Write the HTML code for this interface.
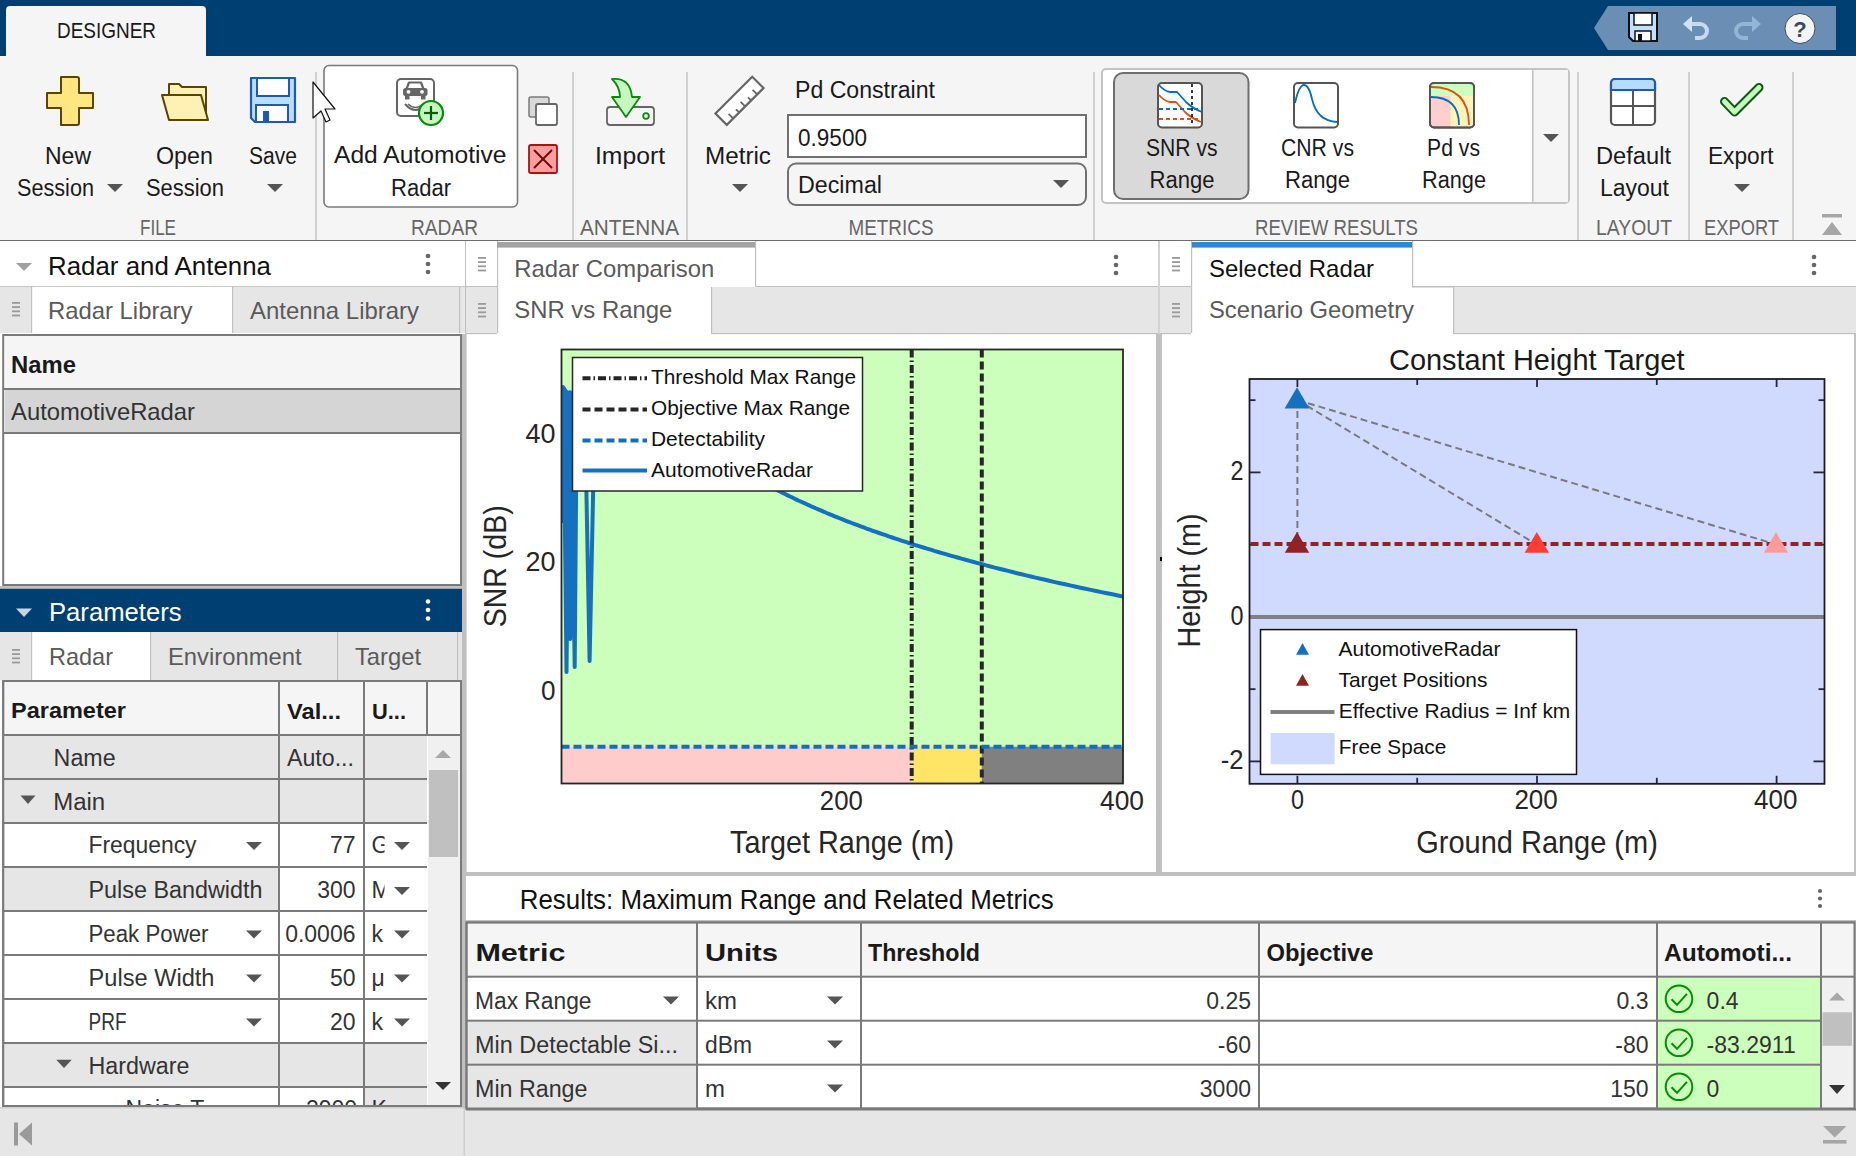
<!DOCTYPE html>
<html><head><meta charset="utf-8"><title>Radar Designer</title>
<style>
html,body{margin:0;padding:0;background:#fff;}
body{width:1856px;height:1156px;overflow:hidden;position:relative;font-family:"Liberation Sans",sans-serif;}
svg.page{position:absolute;left:0;top:0;display:block;}
svg text{font-family:"Liberation Sans",sans-serif;}
</style></head><body>
<svg class="page" width="1856" height="1156" viewBox="0 0 1856 1156">
<rect x="0" y="0" width="1856" height="56" fill="#003f72" />
<path d="M6,56 V10 Q6,6 10,6 H202 Q206,6 206,10 V56 Z" fill="#f5f5f5"/>
<text x="57" y="37.6" font-size="21.5" fill="#1a1a1a" textLength="99" lengthAdjust="spacingAndGlyphs" >DESIGNER</text>
<polygon points="1594,28 1608,6 1836,6 1836,50 1608,50" fill="#6b8fb4"/>
<path d="M1629,13 H1657 V41 H1633 L1629,37 Z" fill="#bfe0ff" stroke="#111" stroke-width="2"/>
<rect x="1634" y="13" width="18" height="12" fill="#fff" stroke="#111" stroke-width="1.5" />
<rect x="1635" y="31" width="16" height="10" fill="#fff" stroke="#111" stroke-width="1.5" />
<rect x="1638" y="34" width="4" height="7" fill="#111" />
<path d="M1688,24 h12 a7,7 0 0 1 0,14 h-5" fill="none" stroke="#cfe3f5" stroke-width="4" opacity="0.9"/>
<polygon points="1683,24 1692,16 1692,32" fill="#cfe3f5"/>
<path d="M1755,24 h-12 a7,7 0 0 0 0,14 h5" fill="none" stroke="#93b6d6" stroke-width="4"/>
<polygon points="1761,24 1752,16 1752,32" fill="#93b6d6"/>
<circle cx="1800" cy="28.5" r="15" fill="#f4f4f4" stroke="#3d4d5c" stroke-width="1"/>
<text x="1800" y="37" font-size="22" fill="#3a4a5a" font-weight="bold" text-anchor="middle" >?</text>
<rect x="0" y="56" width="1856" height="184" fill="#f5f5f5" />
<rect x="0" y="240" width="1856" height="1.8" fill="#6e6e6e" />
<rect x="315.25" y="72" width="1.5" height="168" fill="#c4c4c4" />
<rect x="572.25" y="72" width="1.5" height="168" fill="#c4c4c4" />
<rect x="686.25" y="72" width="1.5" height="168" fill="#c4c4c4" />
<rect x="1093.25" y="72" width="1.5" height="168" fill="#c4c4c4" />
<rect x="1577.25" y="72" width="1.5" height="168" fill="#c4c4c4" />
<rect x="1688.25" y="72" width="1.5" height="168" fill="#c4c4c4" />
<rect x="1792.25" y="72" width="1.5" height="168" fill="#c4c4c4" />
<text x="140" y="234.8" font-size="22.8" fill="#666666" textLength="36" lengthAdjust="spacingAndGlyphs" >FILE</text>
<text x="411" y="234.8" font-size="22.8" fill="#666666" textLength="67" lengthAdjust="spacingAndGlyphs" >RADAR</text>
<text x="580" y="234.8" font-size="22.8" fill="#666666" textLength="99" lengthAdjust="spacingAndGlyphs" >ANTENNA</text>
<text x="848.5" y="234.8" font-size="22.8" fill="#666666" textLength="85" lengthAdjust="spacingAndGlyphs" >METRICS</text>
<text x="1255" y="234.8" font-size="22.8" fill="#666666" textLength="163" lengthAdjust="spacingAndGlyphs" >REVIEW RESULTS</text>
<text x="1596" y="234.8" font-size="22.8" fill="#666666" textLength="76" lengthAdjust="spacingAndGlyphs" >LAYOUT</text>
<text x="1704" y="234.8" font-size="22.8" fill="#666666" textLength="75" lengthAdjust="spacingAndGlyphs" >EXPORT</text>
<path d="M61,77 h16 a2,2 0 0 1 2,2 v14 h14 v15 h-14 v15 a2,2 0 0 1 -2,2 h-16 v-17 h-14 v-15 h14 z" fill="#ffe680" stroke="#5a4400" stroke-width="2" stroke-linejoin="round" transform="translate(0,0)"/>
<text x="45" y="164" font-size="23" fill="#1a1a1a" textLength="46" lengthAdjust="spacingAndGlyphs" >New</text>
<text x="17" y="196" font-size="23" fill="#1a1a1a" textLength="77" lengthAdjust="spacingAndGlyphs" >Session</text>
<polygon points="107,184 123,184 115.0,192" fill="#555"/>
<path d="M169,84 h10 l3,3 h24 v30 h-37 z" fill="#fff0b3" stroke="#5a4400" stroke-width="2" stroke-linejoin="round"/>
<path d="M162,95 h39 l7,25 h-39 z" fill="#fff0b3" stroke="#5a4400" stroke-width="2" stroke-linejoin="round"/>
<text x="156" y="164" font-size="23" fill="#1a1a1a" textLength="57" lengthAdjust="spacingAndGlyphs" >Open</text>
<text x="146" y="196" font-size="23" fill="#1a1a1a" textLength="78" lengthAdjust="spacingAndGlyphs" >Session</text>
<path d="M251,78 h44 v44 h-40 l-4,-4 z" fill="#b9ddff" stroke="#1d5bb0" stroke-width="2.2" stroke-linejoin="round"/>
<rect x="257" y="78" width="32" height="18" fill="#fff" stroke="#1d5bb0" stroke-width="2" />
<rect x="256" y="105" width="32" height="17" fill="#fff" stroke="#1d5bb0" stroke-width="2" />
<rect x="263" y="111" width="6" height="11" fill="#1d5bb0" />
<text x="249" y="164" font-size="23" fill="#1a1a1a" textLength="48" lengthAdjust="spacingAndGlyphs" >Save</text>
<polygon points="267,184 283,184 275.0,192" fill="#555"/>
<rect x="324" y="65.5" width="193.5" height="141.5" fill="#fff" stroke="#7a7a7a" stroke-width="1.6" rx="5" />
<rect x="397" y="79" width="37" height="37" fill="#fff" stroke="#666" stroke-width="2" rx="4" />
<path d="M406.5,89 l2.5,-6.5 h12 l2.5,6.5" fill="none" stroke="#666" stroke-width="2.2" stroke-linejoin="round"/>
<rect x="403" y="88" width="24.5" height="8" rx="2.5" fill="#666"/>
<rect x="405" y="95" width="4.5" height="4.5" fill="#666" />
<rect x="421" y="95" width="4.5" height="4.5" fill="#666" />
<circle cx="408.5" cy="91.8" r="1.9" fill="#fff"/><circle cx="422" cy="91.8" r="1.9" fill="#fff"/>
<path d="M405,104 q10.5,12 21,0" fill="none" stroke="#666" stroke-width="2"/>
<path d="M408,104 q7.5,7 15,0" fill="none" stroke="#666" stroke-width="1.6"/>
<circle cx="431" cy="113" r="12" fill="#c6f7c0" stroke="#0a8a0a" stroke-width="2.2"/>
<line x1="431" y1="106" x2="431" y2="120" stroke="#0a5a0a" stroke-width="2.2" />
<line x1="424" y1="113" x2="438" y2="113" stroke="#0a5a0a" stroke-width="2.2" />
<text x="334" y="163.4" font-size="23" fill="#1a1a1a" textLength="172.5" lengthAdjust="spacingAndGlyphs" >Add Automotive</text>
<text x="391" y="195.8" font-size="23" fill="#1a1a1a" textLength="60" lengthAdjust="spacingAndGlyphs" >Radar</text>
<path d="M313,82 v36 l8,-7 l5,11 l4,-2 l-5,-11 l10,0 z" fill="#fff" stroke="#111" stroke-width="1.2" stroke-linejoin="round"/>
<rect x="529" y="97" width="20" height="20" fill="#d9d9d9" stroke="#7a7a7a" stroke-width="1.5" rx="2" />
<rect x="536" y="104" width="21" height="21" fill="#fff" stroke="#666" stroke-width="1.8" rx="2" />
<rect x="529" y="145" width="28" height="28" fill="#ff9c9c" stroke="#a31515" stroke-width="1.8" rx="2" />
<line x1="534" y1="150" x2="552" y2="168" stroke="#6b0d0d" stroke-width="2" />
<line x1="552" y1="150" x2="534" y2="168" stroke="#6b0d0d" stroke-width="2" />
<rect x="607" y="107" width="47" height="18" fill="#f5f5f5" stroke="#666" stroke-width="1.8" rx="3" />
<circle cx="646" cy="116" r="2.8" fill="none" stroke="#0a8a0a" stroke-width="1.8"/>
<path d="M612,79 q18,-2 20,18 h8 l-14,20 l-14,-20 h8 q0,-10 -8,-18 z" fill="#c6f7c0" stroke="#0a8a0a" stroke-width="1.8" stroke-linejoin="round"/>
<text x="595" y="164" font-size="23" fill="#1a1a1a" textLength="70" lengthAdjust="spacingAndGlyphs" >Import</text>
<g transform="translate(739.5,100.8) rotate(-45)"><rect x="-26" y="-8" width="52" height="16" fill="#fff" stroke="#666" stroke-width="2.2"/>
<line x1="-17.0" y1="8" x2="-17.0" y2="1.5" stroke="#666" stroke-width="1.8"/>
<line x1="-8.5" y1="8" x2="-8.5" y2="3.5" stroke="#666" stroke-width="1.8"/>
<line x1="0.0" y1="8" x2="0.0" y2="1.5" stroke="#666" stroke-width="1.8"/>
<line x1="8.5" y1="8" x2="8.5" y2="3.5" stroke="#666" stroke-width="1.8"/>
<line x1="17.0" y1="8" x2="17.0" y2="1.5" stroke="#666" stroke-width="1.8"/>
</g>
<text x="705" y="164" font-size="23" fill="#1a1a1a" textLength="66" lengthAdjust="spacingAndGlyphs" >Metric</text>
<polygon points="732,184 748,184 740.0,192" fill="#555"/>
<text x="795" y="98" font-size="23" fill="#1a1a1a" textLength="140" lengthAdjust="spacingAndGlyphs" >Pd Constraint</text>
<rect x="788" y="115" width="298" height="42" fill="#fff" stroke="#707070" stroke-width="2" />
<text x="798" y="145.7" font-size="23" fill="#1a1a1a" textLength="69" lengthAdjust="spacingAndGlyphs" >0.9500</text>
<rect x="788" y="163.5" width="298" height="41.5" fill="#f5f5f5" stroke="#707070" stroke-width="2" rx="8" />
<text x="798" y="193.4" font-size="23" fill="#1a1a1a" textLength="84" lengthAdjust="spacingAndGlyphs" >Decimal</text>
<polygon points="1053,180 1069,180 1061.0,188" fill="#555"/>
<rect x="1102" y="69" width="467" height="134" fill="#fff" stroke="#c4c4c4" stroke-width="2" rx="4" />
<rect x="1533" y="70" width="35" height="132" fill="#f5f5f5" />
<rect x="1532" y="70" width="1.6" height="132" fill="#c4c4c4" />
<polygon points="1543,134 1559,134 1551.0,142" fill="#555"/>
<rect x="1114" y="73" width="134.5" height="126" fill="#d9d9d9" stroke="#6e6e6e" stroke-width="2" rx="9" />
<rect x="1158" y="83" width="44" height="44.5" fill="#fff" stroke="#555" stroke-width="2" rx="4" />
<path d="M1159,85 q5,6 11,7 h7 l9,10 q6,6 16,10" fill="none" stroke="#0072bd" stroke-width="1.8" stroke-linejoin="round"/>
<path d="M1159,95 q5,6 11,7 h6 l9,10 q6,6 16,10" fill="none" stroke="#d95319" stroke-width="1.8" stroke-linejoin="round"/>
<line x1="1159" y1="109" x2="1201" y2="109" stroke="#0072bd" stroke-width="1.8" stroke-dasharray="4,3" />
<line x1="1159" y1="119" x2="1201" y2="119" stroke="#d95319" stroke-width="1.8" stroke-dasharray="4,3" />
<line x1="1192" y1="84" x2="1192" y2="126" stroke="#222" stroke-width="1.8" stroke-dasharray="3,3" />
<text x="1146" y="156" font-size="23" fill="#1a1a1a" textLength="71.5" lengthAdjust="spacingAndGlyphs" >SNR vs</text>
<text x="1149.5" y="188" font-size="23" fill="#1a1a1a" textLength="65" lengthAdjust="spacingAndGlyphs" >Range</text>
<rect x="1294" y="83" width="44" height="44.5" fill="#fff" stroke="#555" stroke-width="2" rx="4" />
<path d="M1295,103 q4,-18 9,-18 q5,0 8,14 q5,22 25,23" fill="none" stroke="#0072bd" stroke-width="1.8"/>
<text x="1281" y="156" font-size="23" fill="#1a1a1a" textLength="73" lengthAdjust="spacingAndGlyphs" >CNR vs</text>
<text x="1285" y="188" font-size="23" fill="#1a1a1a" textLength="65" lengthAdjust="spacingAndGlyphs" >Range</text>
<rect x="1430" y="83" width="44" height="44.5" fill="#ffcfcf" stroke="#555" stroke-width="2" rx="4" />
<path d="M1431,84 h42 v12 h-42 z" fill="#ccffbb"/>
<path d="M1450.5,96 h22.5 v30.5 h-22.5 z" fill="#fff3b8"/>
<rect x="1430" y="83" width="44" height="44.5" fill="none" stroke="#555" stroke-width="2" rx="4" />
<path d="M1431,87 q38,0 38,38" fill="none" stroke="#d95319" stroke-width="1.8"/>
<path d="M1431,97 q28,0 28,28" fill="none" stroke="#0072bd" stroke-width="1.8"/>
<text x="1427" y="156" font-size="23" fill="#1a1a1a" textLength="53" lengthAdjust="spacingAndGlyphs" >Pd vs</text>
<text x="1422" y="188" font-size="23" fill="#1a1a1a" textLength="64" lengthAdjust="spacingAndGlyphs" >Range</text>
<rect x="1611" y="79" width="44" height="46" fill="#fff" stroke="#555" stroke-width="2.2" rx="4" />
<path d="M1611,90 v-7 a4,4 0 0 1 4,-4 h36 a4,4 0 0 1 4,4 v7 z" fill="#b3dcff" stroke="#1d5bb0" stroke-width="2.2"/>
<line x1="1633" y1="90" x2="1633" y2="125" stroke="#555" stroke-width="2" />
<line x1="1611" y1="106" x2="1655" y2="106" stroke="#555" stroke-width="2" />
<text x="1596" y="164" font-size="23" fill="#1a1a1a" textLength="75" lengthAdjust="spacingAndGlyphs" >Default</text>
<text x="1600" y="196" font-size="23" fill="#1a1a1a" textLength="69" lengthAdjust="spacingAndGlyphs" >Layout</text>
<path d="M1724.5,101.5 L1734.5,112 L1759,87.5" fill="none" stroke="#0b5a0b" stroke-width="9" stroke-linecap="round" stroke-linejoin="round"/>
<path d="M1724.5,101.5 L1734.5,112 L1759,87.5" fill="none" stroke="#c6f7c0" stroke-width="5" stroke-linecap="round" stroke-linejoin="round"/>
<text x="1708" y="164" font-size="23" fill="#1a1a1a" textLength="65.5" lengthAdjust="spacingAndGlyphs" >Export</text>
<polygon points="1734,184 1750,184 1742.0,192" fill="#555"/>
<rect x="1822" y="214" width="20" height="3.5" fill="#a6a6a6" />
<polygon points="1822,235 1842,235 1832.0,222" fill="#a6a6a6"/>
<rect x="0" y="241" width="466" height="867" fill="#fff" />
<rect x="465" y="241" width="1.2" height="867" fill="#c0c0c0" />
<rect x="0" y="286" width="465" height="1.5" fill="#c8c8c8" />
<polygon points="16,263 32,263 24.0,271" fill="#a0a0a0"/>
<text x="48" y="275" font-size="26" fill="#111" textLength="223" lengthAdjust="spacingAndGlyphs" >Radar and Antenna</text>
<circle cx="428" cy="256" r="2.3" fill="#666"/>
<circle cx="428" cy="264" r="2.3" fill="#666"/>
<circle cx="428" cy="272" r="2.3" fill="#666"/>
<rect x="0" y="287" width="465" height="46" fill="#e6e6e6" />
<rect x="31" y="287" width="201" height="47" fill="#fff" />
<rect x="31" y="287" width="1.2" height="46" fill="#c0c0c0" />
<rect x="232" y="287" width="1.2" height="46" fill="#c0c0c0" />
<rect x="459" y="287" width="1.2" height="46" fill="#c0c0c0" />
<rect x="12" y="302.0" width="8" height="1.8" fill="#9a9a9a" />
<rect x="12" y="306.2" width="8" height="1.8" fill="#9a9a9a" />
<rect x="12" y="310.4" width="8" height="1.8" fill="#9a9a9a" />
<rect x="12" y="314.6" width="8" height="1.8" fill="#9a9a9a" />
<text x="48" y="318.7" font-size="24" fill="#5a5a5a" textLength="144.5" lengthAdjust="spacingAndGlyphs" >Radar Library</text>
<text x="250" y="318.7" font-size="24" fill="#5a5a5a" textLength="169" lengthAdjust="spacingAndGlyphs" >Antenna Library</text>
<rect x="3.2" y="335" width="457.8" height="250" fill="#fff" stroke="#7a7a7a" stroke-width="2" />
<rect x="5" y="336" width="455" height="52" fill="#f5f5f5" />
<rect x="4" y="388" width="457" height="2" fill="#7a7a7a" />
<rect x="5" y="390" width="455" height="42" fill="#d5d5d5" />
<rect x="4" y="432" width="457" height="2" fill="#7a7a7a" />
<text x="11" y="373" font-size="23" fill="#1a1a1a" font-weight="bold" textLength="65" lengthAdjust="spacingAndGlyphs" >Name</text>
<text x="11" y="419.7" font-size="24" fill="#333" textLength="184" lengthAdjust="spacingAndGlyphs" >AutomotiveRadar</text>
<rect x="0" y="586" width="468" height="3" fill="#c0c0c0" />
<rect x="0" y="588.8" width="464" height="43.2" fill="#003f72" />
<polygon points="16,608.5 32,608.5 24.0,617" fill="#c8d6e4"/>
<text x="49" y="621.2" font-size="26" fill="#fff" textLength="132.5" lengthAdjust="spacingAndGlyphs" >Parameters</text>
<circle cx="428" cy="601.5" r="2.3" fill="#fff"/>
<circle cx="428" cy="610" r="2.3" fill="#fff"/>
<circle cx="428" cy="618.5" r="2.3" fill="#fff"/>
<rect x="0" y="632" width="464" height="48" fill="#e6e6e6" />
<rect x="31" y="632" width="119" height="49" fill="#fff" />
<rect x="31" y="632" width="1.2" height="48" fill="#c0c0c0" />
<rect x="150" y="632" width="1.2" height="48" fill="#c0c0c0" />
<rect x="337" y="632" width="1.2" height="48" fill="#c0c0c0" />
<rect x="457" y="632" width="1.2" height="48" fill="#c0c0c0" />
<rect x="12" y="649.0" width="8" height="1.8" fill="#9a9a9a" />
<rect x="12" y="653.2" width="8" height="1.8" fill="#9a9a9a" />
<rect x="12" y="657.4" width="8" height="1.8" fill="#9a9a9a" />
<rect x="12" y="661.6" width="8" height="1.8" fill="#9a9a9a" />
<text x="49" y="664.8" font-size="24" fill="#5a5a5a" textLength="64" lengthAdjust="spacingAndGlyphs" >Radar</text>
<text x="168" y="664.8" font-size="24" fill="#5a5a5a" textLength="133.5" lengthAdjust="spacingAndGlyphs" >Environment</text>
<text x="355" y="664.8" font-size="24" fill="#5a5a5a" textLength="66" lengthAdjust="spacingAndGlyphs" >Target</text>
<rect x="3.2" y="681" width="457.8" height="425" fill="#fff" stroke="#7a7a7a" stroke-width="2" />
<rect x="5" y="682" width="455" height="53" fill="#f5f5f5" />
<rect x="5" y="736" width="274" height="43" fill="#e6e6e6" />
<rect x="280" y="736" width="84" height="43" fill="#e6e6e6" />
<rect x="365" y="736" width="62" height="43" fill="#e6e6e6" />
<rect x="5" y="780" width="274" height="43" fill="#e6e6e6" />
<rect x="280" y="780" width="84" height="43" fill="#e6e6e6" />
<rect x="365" y="780" width="62" height="43" fill="#e6e6e6" />
<rect x="5" y="868" width="274" height="43" fill="#e6e6e6" />
<rect x="5" y="1044" width="274" height="43" fill="#e6e6e6" />
<rect x="280" y="1044" width="84" height="43" fill="#e6e6e6" />
<rect x="365" y="1044" width="62" height="43" fill="#e6e6e6" />
<rect x="365" y="1088" width="62" height="18" fill="#e6e6e6" />
<rect x="4" y="734" width="423" height="2" fill="#7a7a7a" />
<rect x="4" y="778" width="423" height="2" fill="#7a7a7a" />
<rect x="4" y="822" width="423" height="2" fill="#7a7a7a" />
<rect x="4" y="866" width="423" height="2" fill="#7a7a7a" />
<rect x="4" y="910" width="423" height="2" fill="#7a7a7a" />
<rect x="4" y="954" width="423" height="2" fill="#7a7a7a" />
<rect x="4" y="998" width="423" height="2" fill="#7a7a7a" />
<rect x="4" y="1042" width="423" height="2" fill="#7a7a7a" />
<rect x="4" y="1086" width="423" height="2" fill="#7a7a7a" />
<rect x="4" y="734" width="456" height="2" fill="#7a7a7a" />
<rect x="278" y="682" width="2" height="423" fill="#7a7a7a" />
<rect x="363" y="682" width="2" height="423" fill="#7a7a7a" />
<rect x="426" y="682" width="2" height="53" fill="#7a7a7a" />
<rect x="428" y="736" width="32" height="369" fill="#f0f0f0" />
<polygon points="435,758 451,758 443.0,750" fill="#a8a8a8"/>
<rect x="429" y="770" width="29" height="87" fill="#c0c0c0" />
<polygon points="435,1082 451,1082 443.0,1090" fill="#333"/>
<rect x="3.2" y="681" width="457.8" height="425" fill="none" stroke="#7a7a7a" stroke-width="2" />
<text x="11" y="718.4" font-size="22" fill="#1a1a1a" font-weight="bold" textLength="115" lengthAdjust="spacingAndGlyphs" >Parameter</text>
<text x="287" y="719" font-size="22" fill="#1a1a1a" font-weight="bold" textLength="54" lengthAdjust="spacingAndGlyphs" >Val...</text>
<text x="372" y="719" font-size="22" fill="#1a1a1a" font-weight="bold" textLength="34" lengthAdjust="spacingAndGlyphs" >U...</text>
<text x="53.6" y="766" font-size="23" fill="#333" textLength="62" lengthAdjust="spacingAndGlyphs" >Name</text>
<text x="287" y="765.6" font-size="23" fill="#333" textLength="67" lengthAdjust="spacingAndGlyphs" >Auto...</text>
<polygon points="20.5,795.5 35.5,795.5 28.0,804" fill="#555"/>
<text x="53.2" y="810.3" font-size="23" fill="#333" textLength="52" lengthAdjust="spacingAndGlyphs" >Main</text>
<text x="88.5" y="853.4" font-size="23" fill="#333" textLength="108" lengthAdjust="spacingAndGlyphs" >Frequency</text>
<polygon points="246,841.9 262,841.9 254.0,849.9" fill="#555"/>
<text x="355.5" y="853.4" font-size="23" fill="#333" text-anchor="end" >77</text>
<svg x="365" y="823.4" width="19.5" height="40" overflow="hidden">
<text x="6.5" y="30" font-size="23" fill="#333" >G</text>
</svg>
<polygon points="394,841.9 410,841.9 402.0,849.9" fill="#555"/>
<text x="88.5" y="898.4" font-size="23" fill="#333" textLength="174" lengthAdjust="spacingAndGlyphs" >Pulse Bandwidth</text>
<text x="355.5" y="898.4" font-size="23" fill="#333" text-anchor="end" >300</text>
<svg x="365" y="868.4" width="19.5" height="40" overflow="hidden">
<text x="6.5" y="30" font-size="23" fill="#333" >M</text>
</svg>
<polygon points="394,886.9 410,886.9 402.0,894.9" fill="#555"/>
<text x="88.5" y="942" font-size="23" fill="#333" textLength="120" lengthAdjust="spacingAndGlyphs" >Peak Power</text>
<polygon points="246,930.5 262,930.5 254.0,938.5" fill="#555"/>
<text x="355.5" y="942" font-size="23" fill="#333" text-anchor="end" >0.0006</text>
<svg x="365" y="912" width="19.5" height="40" overflow="hidden">
<text x="6.5" y="30" font-size="23" fill="#333" >k</text>
</svg>
<polygon points="394,930.5 410,930.5 402.0,938.5" fill="#555"/>
<text x="88.5" y="986" font-size="23" fill="#333" textLength="126" lengthAdjust="spacingAndGlyphs" >Pulse Width</text>
<polygon points="246,974.5 262,974.5 254.0,982.5" fill="#555"/>
<text x="355.5" y="986" font-size="23" fill="#333" text-anchor="end" >50</text>
<svg x="365" y="956" width="19.5" height="40" overflow="hidden">
<text x="6.5" y="30" font-size="23" fill="#333" >μ</text>
</svg>
<polygon points="394,974.5 410,974.5 402.0,982.5" fill="#555"/>
<text x="88.5" y="1030" font-size="23" fill="#333" textLength="38" lengthAdjust="spacingAndGlyphs" >PRF</text>
<polygon points="246,1018.5 262,1018.5 254.0,1026.5" fill="#555"/>
<text x="355.5" y="1030" font-size="23" fill="#333" text-anchor="end" >20</text>
<svg x="365" y="1000" width="19.5" height="40" overflow="hidden">
<text x="6.5" y="30" font-size="23" fill="#333" >k</text>
</svg>
<polygon points="394,1018.5 410,1018.5 402.0,1026.5" fill="#555"/>
<polygon points="56.3,1059.7 71.7,1059.7 64.0,1068" fill="#555"/>
<text x="88.5" y="1073.8" font-size="23" fill="#333" textLength="101" lengthAdjust="spacingAndGlyphs" >Hardware</text>
<svg x="0" y="1088" width="427" height="17" overflow="hidden">
<text x="125.5" y="29" font-size="23" fill="#333" >Noise T...</text>
<text x="306" y="29" font-size="23" fill="#333" >2900</text>
<text x="371.5" y="29" font-size="23" fill="#333" >K</text>
</svg>
<rect x="0" y="1108" width="1856" height="48" fill="#e6e6e6" />
<rect x="0" y="1107" width="466" height="1.5" fill="#d0d0d0" />
<rect x="463.5" y="1108" width="1.5" height="48" fill="#cfcfcf" />
<rect x="14" y="1122.5" width="4" height="23" fill="#9a9a9a" />
<polygon points="32,1122.5 32,1145.5 19,1134" fill="#9a9a9a"/>
<rect x="1823" y="1140" width="23.5" height="3.6" fill="#a6a6a6" />
<polygon points="1823,1126 1846.5,1126 1834.75,1137.5" fill="#a6a6a6"/>
<rect x="466" y="241" width="1390" height="867" fill="#fff" />
<rect x="462" y="334" width="4.6" height="774" fill="#c0c0c0" />
<rect x="1156" y="334" width="6" height="538" fill="#c0c0c0" />
<rect x="466" y="872" width="1390" height="4" fill="#c0c0c0" />
<rect x="1854" y="334" width="2" height="538" fill="#c0c0c0" />
<rect x="1160" y="557" width="2" height="4" fill="#000" />
<rect x="466" y="241" width="31" height="46" fill="#fff" />
<rect x="497" y="241" width="1.2" height="46" fill="#c0c0c0" />
<rect x="497" y="242" width="258" height="5.6" fill="#a3a3a3" />
<rect x="466" y="286" width="31" height="1.5" fill="#c0c0c0" />
<rect x="755" y="241" width="1.2" height="46" fill="#c0c0c0" />
<rect x="755" y="286" width="403" height="1.5" fill="#c0c0c0" />
<rect x="1158.3" y="241" width="1.4" height="93" fill="#c0c0c0" />
<rect x="478" y="257.0" width="8" height="1.8" fill="#9a9a9a" />
<rect x="478" y="261.2" width="8" height="1.8" fill="#9a9a9a" />
<rect x="478" y="265.4" width="8" height="1.8" fill="#9a9a9a" />
<rect x="478" y="269.6" width="8" height="1.8" fill="#9a9a9a" />
<text x="514.3" y="277" font-size="24" fill="#5a5a5a" textLength="200" lengthAdjust="spacingAndGlyphs" >Radar Comparison</text>
<circle cx="1116" cy="257" r="2.3" fill="#666"/>
<circle cx="1116" cy="265" r="2.3" fill="#666"/>
<circle cx="1116" cy="273" r="2.3" fill="#666"/>
<rect x="466" y="287" width="31" height="46" fill="#e6e6e6" />
<rect x="497" y="287" width="1.2" height="46" fill="#c0c0c0" />
<rect x="711" y="287" width="447" height="46" fill="#e6e6e6" />
<rect x="711" y="287" width="1.2" height="46" fill="#c0c0c0" />
<rect x="466" y="333" width="1.2" height="1" fill="#c0c0c0" />
<rect x="711" y="333" width="447" height="1.2" fill="#c0c0c0" />
<rect x="466" y="333" width="31" height="1.2" fill="#c0c0c0" />
<rect x="478" y="303.0" width="8" height="1.8" fill="#9a9a9a" />
<rect x="478" y="307.2" width="8" height="1.8" fill="#9a9a9a" />
<rect x="478" y="311.4" width="8" height="1.8" fill="#9a9a9a" />
<rect x="478" y="315.6" width="8" height="1.8" fill="#9a9a9a" />
<text x="514.3" y="318.4" font-size="24" fill="#5a5a5a" textLength="158" lengthAdjust="spacingAndGlyphs" >SNR vs Range</text>
<rect x="1160" y="241" width="31" height="46" fill="#fff" />
<rect x="1191" y="241" width="1.2" height="46" fill="#c0c0c0" />
<rect x="1192" y="242" width="220" height="5.6" fill="#2a8ad9" />
<rect x="1160" y="286" width="31" height="1.5" fill="#c0c0c0" />
<rect x="1412" y="241" width="1.2" height="46" fill="#c0c0c0" />
<rect x="1412" y="286" width="444" height="1.5" fill="#c0c0c0" />
<rect x="1172" y="257.0" width="8" height="1.8" fill="#9a9a9a" />
<rect x="1172" y="261.2" width="8" height="1.8" fill="#9a9a9a" />
<rect x="1172" y="265.4" width="8" height="1.8" fill="#9a9a9a" />
<rect x="1172" y="269.6" width="8" height="1.8" fill="#9a9a9a" />
<text x="1209" y="276.8" font-size="24" fill="#111" textLength="165" lengthAdjust="spacingAndGlyphs" >Selected Radar</text>
<circle cx="1814" cy="257" r="2.3" fill="#666"/>
<circle cx="1814" cy="265" r="2.3" fill="#666"/>
<circle cx="1814" cy="273" r="2.3" fill="#666"/>
<rect x="1160" y="287" width="31" height="46" fill="#e6e6e6" />
<rect x="1191" y="287" width="1.2" height="46" fill="#c0c0c0" />
<rect x="1453" y="287" width="403" height="46" fill="#e6e6e6" />
<rect x="1453" y="287" width="1.2" height="46" fill="#c0c0c0" />
<rect x="1453" y="333" width="403" height="1.2" fill="#c0c0c0" />
<rect x="1160" y="333" width="31" height="1.2" fill="#c0c0c0" />
<rect x="1172" y="303.0" width="8" height="1.8" fill="#9a9a9a" />
<rect x="1172" y="307.2" width="8" height="1.8" fill="#9a9a9a" />
<rect x="1172" y="311.4" width="8" height="1.8" fill="#9a9a9a" />
<rect x="1172" y="315.6" width="8" height="1.8" fill="#9a9a9a" />
<text x="1209" y="318.4" font-size="24" fill="#5a5a5a" textLength="205" lengthAdjust="spacingAndGlyphs" >Scenario Geometry</text>
<clipPath id="cp1"><rect x="561.5" y="349.5" width="561.5" height="434.0"/></clipPath>
<g clip-path="url(#cp1)">
<rect x="561.5" y="349.5" width="561.5" height="434.0" fill="#ccffbb" />
<rect x="561.5" y="746.7" width="350.20000000000005" height="36.799999999999955" fill="#ffcccc" />
<rect x="911.7" y="746.7" width="70.09999999999991" height="36.799999999999955" fill="#ffe566" />
<rect x="981.8" y="746.7" width="141.20000000000005" height="36.799999999999955" fill="#808080" />
<polyline points="643.6,383.9 645.3,386.1 647.0,388.3 648.8,390.6 650.6,392.8 652.4,395.0 654.3,397.2 656.2,399.4 658.1,401.7 660.1,403.9 662.1,406.1 664.2,408.3 666.3,410.5 668.4,412.8 670.6,415.0 672.9,417.2 675.1,419.4 677.5,421.6 679.8,423.8 682.2,426.1 684.7,428.3 687.2,430.5 689.8,432.7 692.4,434.9 695.1,437.2 697.8,439.4 700.6,441.6 702.0,442.7 703.4,443.8 704.9,444.9 706.3,446.1 707.8,447.2 709.3,448.3 710.8,449.4 712.3,450.5 713.8,451.6 715.4,452.7 716.9,453.9 718.5,455.0 720.1,456.1 721.7,457.2 723.4,458.3 725.0,459.4 726.7,460.6 728.3,461.7 730.0,462.8 731.7,463.9 733.5,465.0 735.2,466.1 737.0,467.2 738.8,468.4 740.6,469.5 742.4,470.6 744.2,471.7 746.1,472.8 747.9,473.9 749.8,475.0 751.7,476.2 753.7,477.3 755.6,478.4 757.6,479.5 759.6,480.6 761.6,481.7 763.6,482.8 765.6,484.0 767.7,485.1 769.8,486.2 771.9,487.3 774.0,488.4 776.2,489.5 778.3,490.7 780.5,491.8 782.7,492.9 785.0,494.0 787.2,495.1 789.5,496.2 791.8,497.3 794.2,498.5 796.5,499.6 798.9,500.7 801.3,501.8 803.7,502.9 806.2,504.0 808.6,505.1 811.1,506.3 813.6,507.4 816.2,508.5 818.8,509.6 821.4,510.7 824.0,511.8 826.6,513.0 829.3,514.1 832.0,515.2 834.7,516.3 837.5,517.4 840.3,518.5 843.1,519.6 845.9,520.8 848.8,521.9 851.7,523.0 854.6,524.1 857.6,525.2 860.6,526.3 863.6,527.4 866.6,528.6 869.7,529.7 872.8,530.8 876.0,531.9 879.1,533.0 882.3,534.1 885.6,535.2 888.8,536.4 892.1,537.5 895.5,538.6 898.8,539.7 902.2,540.8 905.7,541.9 909.1,543.1 912.6,544.2 916.2,545.3 919.7,546.4 923.3,547.5 927.0,548.6 930.7,549.7 934.4,550.9 938.1,552.0 941.9,553.1 945.8,554.2 949.6,555.3 953.5,556.4 957.5,557.5 961.5,558.7 965.5,559.8 969.5,560.9 973.7,562.0 977.8,563.1 982.0,564.2 986.2,565.4 990.5,566.5 994.8,567.6 999.2,568.7 1003.6,569.8 1008.0,570.9 1012.5,572.0 1017.0,573.2 1021.6,574.3 1026.2,575.4 1030.9,576.5 1035.6,577.6 1040.4,578.7 1045.2,579.8 1050.1,581.0 1055.0,582.1 1059.9,583.2 1065.0,584.3 1070.0,585.4 1075.1,586.5 1080.3,587.7 1085.5,588.8 1090.8,589.9 1096.1,591.0 1101.5,592.1 1106.9,593.2 1112.4,594.3 1117.9,595.5 1123.5,596.6" fill="none" stroke="#1570c0" stroke-width="4"/>
<path d="M561,386 Q564,383 566,388 Q568,392 570,390 L573,392 L575,384 L577,386 L577,470 L573,560 L568,470 L564,523 L561,523 Z" fill="#1570c0"/>
<polyline points="564,440 566.5,672 568.5,470 570.2,639 572,480 574.7,667 576.5,440" fill="none" stroke="#1570c0" stroke-width="4" stroke-linejoin="round" stroke-linecap="round"/>
<polyline points="586,470 589.6,661 593.6,470" fill="none" stroke="#1570c0" stroke-width="4" stroke-linejoin="round" stroke-linecap="round"/>
<line x1="911.7" y1="349.5" x2="911.7" y2="783.5" stroke="#262626" stroke-width="4" stroke-dasharray="8,3,1.5,3" />
<line x1="981.8" y1="349.5" x2="981.8" y2="783.5" stroke="#262626" stroke-width="4" stroke-dasharray="8,4" />
<line x1="561.5" y1="746.7" x2="1123" y2="746.7" stroke="#0f6fc6" stroke-width="4" stroke-dasharray="8,4" />
</g>
<rect x="561.5" y="349.5" width="561.5" height="434.0" fill="none" stroke="#262626" stroke-width="1.8" />
<rect x="572.5" y="357.5" width="290" height="133.5" fill="#fff" stroke="#262626" stroke-width="1.5" />
<line x1="582.5" y1="378.3" x2="647" y2="378.3" stroke="#262626" stroke-width="4" stroke-dasharray="8,3,1.5,3" />
<line x1="582.5" y1="409.4" x2="647" y2="409.4" stroke="#262626" stroke-width="4" stroke-dasharray="8,4" />
<line x1="582.5" y1="440.4" x2="647" y2="440.4" stroke="#0f6fc6" stroke-width="4" stroke-dasharray="8,4" />
<line x1="582.5" y1="470.5" x2="647" y2="470.5" stroke="#1570c0" stroke-width="4" />
<text x="651" y="383.7" font-size="21" fill="#111" textLength="205" lengthAdjust="spacingAndGlyphs" >Threshold Max Range</text>
<text x="651" y="414.7" font-size="21" fill="#111" textLength="199" lengthAdjust="spacingAndGlyphs" >Objective Max Range</text>
<text x="651" y="445.9" font-size="21" fill="#111" textLength="114" lengthAdjust="spacingAndGlyphs" >Detectability</text>
<text x="651" y="476.9" font-size="21" fill="#111" textLength="162" lengthAdjust="spacingAndGlyphs" >AutomotiveRadar</text>
<text x="555.6" y="442.9" font-size="27.5" fill="#262626" text-anchor="end" textLength="30" lengthAdjust="spacingAndGlyphs" >40</text>
<text x="555.6" y="571.2" font-size="27.5" fill="#262626" text-anchor="end" textLength="30" lengthAdjust="spacingAndGlyphs" >20</text>
<text x="555.6" y="699.9" font-size="27.5" fill="#262626" text-anchor="end" textLength="14.5" lengthAdjust="spacingAndGlyphs" >0</text>
<text x="841.3" y="809.7" font-size="27.5" fill="#262626" text-anchor="middle" textLength="43" lengthAdjust="spacingAndGlyphs" >200</text>
<text x="1122" y="809.7" font-size="27.5" fill="#262626" text-anchor="middle" textLength="44" lengthAdjust="spacingAndGlyphs" >400</text>
<text x="730" y="853" font-size="30.5" fill="#262626" textLength="224" lengthAdjust="spacingAndGlyphs" >Target Range (m)</text>
<text x="0" y="0" font-size="30.5" fill="#262626" textLength="122" lengthAdjust="spacingAndGlyphs" transform="translate(505.8,627.3) rotate(-90)">SNR (dB)</text>
<text x="1389" y="369.8" font-size="30" fill="#1a1a1a" textLength="295.5" lengthAdjust="spacingAndGlyphs" >Constant Height Target</text>
<rect x="1249.5" y="379" width="575.0" height="404.79999999999995" fill="#d0daff" />
<line x1="1297.4" y1="379" x2="1297.4" y2="387" stroke="#262640" stroke-width="1.8" />
<line x1="1297.4" y1="783.8" x2="1297.4" y2="775.8" stroke="#262640" stroke-width="1.8" />
<line x1="1417.2" y1="379" x2="1417.2" y2="385" stroke="#262640" stroke-width="1.8" />
<line x1="1417.2" y1="783.8" x2="1417.2" y2="777.8" stroke="#262640" stroke-width="1.8" />
<line x1="1537.0" y1="379" x2="1537.0" y2="387" stroke="#262640" stroke-width="1.8" />
<line x1="1537.0" y1="783.8" x2="1537.0" y2="775.8" stroke="#262640" stroke-width="1.8" />
<line x1="1656.8000000000002" y1="379" x2="1656.8000000000002" y2="385" stroke="#262640" stroke-width="1.8" />
<line x1="1656.8000000000002" y1="783.8" x2="1656.8000000000002" y2="777.8" stroke="#262640" stroke-width="1.8" />
<line x1="1776.6000000000001" y1="379" x2="1776.6000000000001" y2="387" stroke="#262640" stroke-width="1.8" />
<line x1="1776.6000000000001" y1="783.8" x2="1776.6000000000001" y2="775.8" stroke="#262640" stroke-width="1.8" />
<line x1="1249.5" y1="761.4" x2="1260.5" y2="761.4" stroke="#262640" stroke-width="1.8" />
<line x1="1824.5" y1="761.4" x2="1813.5" y2="761.4" stroke="#262640" stroke-width="1.8" />
<line x1="1249.5" y1="689.15" x2="1255.5" y2="689.15" stroke="#262640" stroke-width="1.8" />
<line x1="1824.5" y1="689.15" x2="1818.5" y2="689.15" stroke="#262640" stroke-width="1.8" />
<line x1="1249.5" y1="616.9" x2="1260.5" y2="616.9" stroke="#262640" stroke-width="1.8" />
<line x1="1824.5" y1="616.9" x2="1813.5" y2="616.9" stroke="#262640" stroke-width="1.8" />
<line x1="1249.5" y1="544.65" x2="1255.5" y2="544.65" stroke="#262640" stroke-width="1.8" />
<line x1="1824.5" y1="544.65" x2="1818.5" y2="544.65" stroke="#262640" stroke-width="1.8" />
<line x1="1249.5" y1="472.4" x2="1260.5" y2="472.4" stroke="#262640" stroke-width="1.8" />
<line x1="1824.5" y1="472.4" x2="1813.5" y2="472.4" stroke="#262640" stroke-width="1.8" />
<line x1="1249.5" y1="400.15" x2="1255.5" y2="400.15" stroke="#262640" stroke-width="1.8" />
<line x1="1824.5" y1="400.15" x2="1818.5" y2="400.15" stroke="#262640" stroke-width="1.8" />
<line x1="1249.5" y1="616.9" x2="1824.5" y2="616.9" stroke="#808080" stroke-width="4" />
<line x1="1250.5" y1="544" x2="1823.5" y2="544" stroke="#8f2424" stroke-width="4" stroke-dasharray="8,4" />
<line x1="1297.4" y1="400" x2="1297.4" y2="544.6" stroke="#7a7a7a" stroke-width="2" stroke-dasharray="7,4" />
<line x1="1297.4" y1="400" x2="1536.8" y2="544.6" stroke="#7a7a7a" stroke-width="2" stroke-dasharray="7,4" />
<line x1="1297.4" y1="400" x2="1776.6" y2="544.6" stroke="#7a7a7a" stroke-width="2" stroke-dasharray="7,4" />
<polygon points="1297,387.2 1309.4,408.4 1284.6,408.4" fill="#1570c0"/>
<polygon points="1297,532 1309.2,552.7 1284.8,552.7" fill="#8f2424"/>
<polygon points="1536.8,532 1549.0,552.7 1524.6,552.7" fill="#ff3d33"/>
<polygon points="1776,532 1788.2,552.7 1763.8,552.7" fill="#ff9a9a"/>
<rect x="1249.5" y="379" width="575.0" height="404.79999999999995" fill="none" stroke="#1a1a2a" stroke-width="1.8" />
<rect x="1260.5" y="629.6" width="316" height="144.8" fill="#fff" stroke="#111" stroke-width="1.5" />
<polygon points="1302.5,643 1309.0,654.7 1296.0,654.7" fill="#1570c0"/>
<polygon points="1302.5,674 1309.0,685.7 1296.0,685.7" fill="#8f2424"/>
<line x1="1270.5" y1="712.1" x2="1334.5" y2="712.1" stroke="#808080" stroke-width="4" />
<rect x="1270.6" y="733" width="64" height="31.3" fill="#d0daff" />
<text x="1338.5" y="656.2" font-size="21" fill="#111" textLength="162" lengthAdjust="spacingAndGlyphs" >AutomotiveRadar</text>
<text x="1338.5" y="687.1" font-size="21" fill="#111" textLength="149" lengthAdjust="spacingAndGlyphs" >Target Positions</text>
<text x="1338.8" y="718.3" font-size="21" fill="#111" textLength="231.5" lengthAdjust="spacingAndGlyphs" >Effective Radius = Inf km</text>
<text x="1338.8" y="754.1" font-size="21" fill="#111" textLength="107.5" lengthAdjust="spacingAndGlyphs" >Free Space</text>
<text x="1243.5" y="480" font-size="27.5" fill="#262626" text-anchor="end" textLength="13" lengthAdjust="spacingAndGlyphs" >2</text>
<text x="1243.5" y="624.6" font-size="27.5" fill="#262626" text-anchor="end" textLength="13" lengthAdjust="spacingAndGlyphs" >0</text>
<text x="1243.5" y="769.1" font-size="27.5" fill="#262626" text-anchor="end" textLength="22.8" lengthAdjust="spacingAndGlyphs" >-2</text>
<text x="1297.4" y="809.3" font-size="27.5" fill="#262626" text-anchor="middle" textLength="13" lengthAdjust="spacingAndGlyphs" >0</text>
<text x="1536.1" y="809.3" font-size="27.5" fill="#262626" text-anchor="middle" textLength="43.4" lengthAdjust="spacingAndGlyphs" >200</text>
<text x="1775.7" y="809.3" font-size="27.5" fill="#262626" text-anchor="middle" textLength="43.4" lengthAdjust="spacingAndGlyphs" >400</text>
<text x="1416.3" y="852.7" font-size="30.5" fill="#262626" textLength="241.5" lengthAdjust="spacingAndGlyphs" >Ground Range (m)</text>
<text x="0" y="0" font-size="30.5" fill="#262626" textLength="134" lengthAdjust="spacingAndGlyphs" transform="translate(1200.3,647.5) rotate(-90)">Height (m)</text>
<rect x="466" y="876" width="1390" height="232" fill="#fff" />
<rect x="466" y="920" width="1390" height="2" fill="#c0c0c0" />
<text x="519.7" y="909.1" font-size="27" fill="#111" textLength="534" lengthAdjust="spacingAndGlyphs" >Results: Maximum Range and Related Metrics</text>
<circle cx="1820" cy="891" r="2.1" fill="#666"/>
<circle cx="1820" cy="898.5" r="2.1" fill="#666"/>
<circle cx="1820" cy="906" r="2.1" fill="#666"/>
<rect x="466.5" y="922.5" width="1388" height="186.0" fill="#fff" stroke="#7a7a7a" stroke-width="2" />
<rect x="468" y="923.5" width="1386" height="53.0" fill="#f5f5f5" />
<rect x="468" y="1021.5" width="228" height="43" fill="#e6e6e6" />
<rect x="468" y="1065.5" width="228" height="43" fill="#e6e6e6" />
<rect x="1658" y="977.5" width="162" height="131" fill="#ccffbb" />
<rect x="1822" y="977.5" width="32" height="131" fill="#f0f0f0" />
<rect x="467" y="975.7" width="1387" height="2" fill="#7a7a7a" />
<rect x="467" y="1019.7" width="1354" height="2" fill="#7a7a7a" />
<rect x="467" y="1063.7" width="1354" height="2" fill="#7a7a7a" />
<rect x="696" y="922.5" width="2" height="186.0" fill="#7a7a7a" />
<rect x="860" y="922.5" width="2" height="186.0" fill="#7a7a7a" />
<rect x="1258" y="922.5" width="2" height="186.0" fill="#7a7a7a" />
<rect x="1656" y="922.5" width="2" height="186.0" fill="#7a7a7a" />
<rect x="1820" y="922.5" width="2" height="186.0" fill="#7a7a7a" />
<rect x="466.5" y="922.5" width="1388" height="186.0" fill="none" stroke="#7a7a7a" stroke-width="2" />
<rect x="466" y="1108" width="1390" height="2.5" fill="#7a7a7a" />
<text x="475.4" y="960.7" font-size="23" fill="#1a1a1a" font-weight="bold" textLength="90" lengthAdjust="spacingAndGlyphs" >Metric</text>
<text x="705" y="960.7" font-size="23" fill="#1a1a1a" font-weight="bold" textLength="73" lengthAdjust="spacingAndGlyphs" >Units</text>
<text x="868" y="960.7" font-size="23" fill="#1a1a1a" font-weight="bold" textLength="112" lengthAdjust="spacingAndGlyphs" >Threshold</text>
<text x="1266.5" y="960.7" font-size="23" fill="#1a1a1a" font-weight="bold" textLength="107" lengthAdjust="spacingAndGlyphs" >Objective</text>
<text x="1664" y="960.7" font-size="23" fill="#1a1a1a" font-weight="bold" textLength="128" lengthAdjust="spacingAndGlyphs" >Automoti...</text>
<text x="475" y="1008.5" font-size="23" fill="#333" textLength="116.5" lengthAdjust="spacingAndGlyphs" >Max Range</text>
<polygon points="663,996.5 679,996.5 671.0,1004.5" fill="#555"/>
<text x="705" y="1008.5" font-size="23" fill="#333" textLength="32" lengthAdjust="spacingAndGlyphs" >km</text>
<polygon points="827,996.5 843,996.5 835.0,1004.5" fill="#555"/>
<text x="1251" y="1008.5" font-size="23" fill="#333" text-anchor="end" >0.25</text>
<text x="1648.5" y="1008.5" font-size="23" fill="#333" text-anchor="end" >0.3</text>
<circle cx="1679" cy="998.8" r="13.3" fill="none" stroke="#0a8a0a" stroke-width="2"/>
<polyline points="1671.5,999.3 1677,1004.8 1687,993.8" fill="none" stroke="#0a8a0a" stroke-width="2"/>
<text x="1706.6" y="1008.5" font-size="23" fill="#333" >0.4</text>
<text x="475" y="1052.5" font-size="23" fill="#333" textLength="203" lengthAdjust="spacingAndGlyphs" >Min Detectable Si...</text>
<text x="705" y="1052.5" font-size="23" fill="#333" textLength="47" lengthAdjust="spacingAndGlyphs" >dBm</text>
<polygon points="827,1040.5 843,1040.5 835.0,1048.5" fill="#555"/>
<text x="1251" y="1052.5" font-size="23" fill="#333" text-anchor="end" >-60</text>
<text x="1648.5" y="1052.5" font-size="23" fill="#333" text-anchor="end" >-80</text>
<circle cx="1679" cy="1042.8" r="13.3" fill="none" stroke="#0a8a0a" stroke-width="2"/>
<polyline points="1671.5,1043.3 1677,1048.8 1687,1037.8" fill="none" stroke="#0a8a0a" stroke-width="2"/>
<text x="1706.6" y="1052.5" font-size="23" fill="#333" >-83.2911</text>
<text x="475" y="1096.5" font-size="23" fill="#333" textLength="112.5" lengthAdjust="spacingAndGlyphs" >Min Range</text>
<text x="705" y="1096.5" font-size="23" fill="#333" textLength="20" lengthAdjust="spacingAndGlyphs" >m</text>
<polygon points="827,1084.5 843,1084.5 835.0,1092.5" fill="#555"/>
<text x="1251" y="1096.5" font-size="23" fill="#333" text-anchor="end" >3000</text>
<text x="1648.5" y="1096.5" font-size="23" fill="#333" text-anchor="end" >150</text>
<circle cx="1679" cy="1086.8" r="13.3" fill="none" stroke="#0a8a0a" stroke-width="2"/>
<polyline points="1671.5,1087.3 1677,1092.8 1687,1081.8" fill="none" stroke="#0a8a0a" stroke-width="2"/>
<text x="1706.6" y="1096.5" font-size="23" fill="#333" >0</text>
<polygon points="1829,1000.5 1845,1000.5 1837.0,992.5" fill="#a8a8a8"/>
<rect x="1822.5" y="1012.3" width="29.5" height="33.5" fill="#c0c0c0" />
<polygon points="1829,1085 1845,1085 1837.0,1094" fill="#333"/>
</svg>
</body></html>
